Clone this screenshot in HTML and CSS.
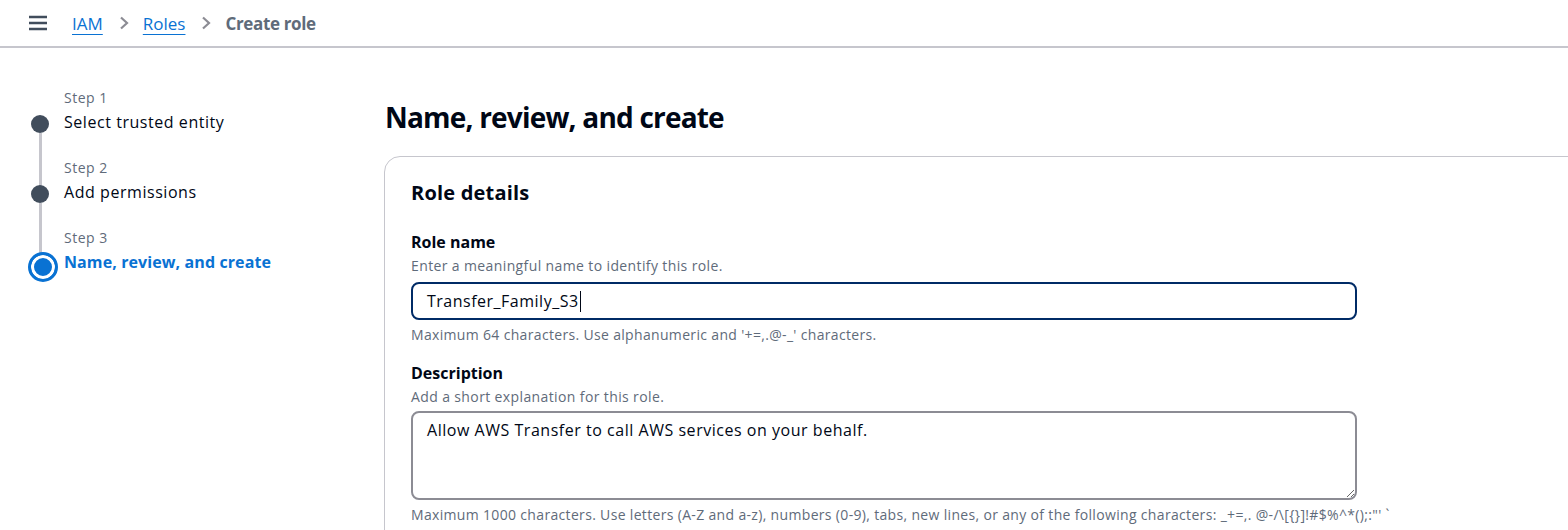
FILE: index.html
```html
<!DOCTYPE html>
<html lang="en">
<head>
<meta charset="utf-8">
<title>Create role</title>
<link rel="stylesheet" href="styles.css">
</head>
<body>
<header class="topbar">
  <button class="menu-btn" aria-label="Menu">
    <svg width="20" height="16" viewBox="0 0 20 16"><path d="M1 2h18M1 8h18M1 14h18" stroke="#414d5c" stroke-width="2.4" fill="none"/></svg>
  </button>
  <nav class="crumbs">
    <a href="#" class="crumb-link">IAM</a>
    <svg class="chev" width="10" height="14" viewBox="0 0 10 14"><path d="M2 1.5l6 5.5-6 5.5" stroke="#8c8c94" stroke-width="2.2" fill="none"/></svg>
    <a href="#" class="crumb-link">Roles</a>
    <svg class="chev" width="10" height="14" viewBox="0 0 10 14"><path d="M2 1.5l6 5.5-6 5.5" stroke="#8c8c94" stroke-width="2.2" fill="none"/></svg>
    <span class="crumb-current">Create role</span>
  </nav>
</header>
<div class="layout">
  <aside class="steps">
    <div class="step done">
      <div class="step-label">Step 1</div>
      <div class="step-title">Select trusted entity</div>
    </div>
    <div class="step done">
      <div class="step-label">Step 2</div>
      <div class="step-title">Add permissions</div>
    </div>
    <div class="step current">
      <div class="step-label">Step 3</div>
      <div class="step-title">Name, review, and create</div>
    </div>
  </aside>
  <main class="main">
    <h1 class="page-title">Name, review, and create</h1>
    <section class="card">
      <h2 class="card-title">Role details</h2>
      <div class="field">
        <div class="field-label">Role name</div>
        <div class="field-desc">Enter a meaningful name to identify this role.</div>
        <div class="input focused" role="textbox">Transfer_Family_S3<span class="caret"></span></div>
        <div class="field-hint">Maximum 64 characters. Use alphanumeric and '+=,.@-_' characters.</div>
      </div>
      <div class="field">
        <div class="field-label">Description</div>
        <div class="field-desc short">Add a short explanation for this role.</div>
        <textarea class="textarea">Allow AWS Transfer to call AWS services on your behalf.</textarea>
        <div class="field-hint">Maximum 1000 characters. Use letters (A-Z and a-z), numbers (0-9), tabs, new lines, or any of the following characters: _+=,. @-/\[{}]!#$%^*();:"' `</div>
      </div>
    </section>
  </main>
</div>
</body>
</html>
```
FILE: styles.css
```css
* { box-sizing: border-box; }
html, body { margin: 0; padding: 0; }
body {
  font-family: "Open Sans", "Noto Sans", sans-serif;
  color: #000716;
  background: #fff;
  overflow: hidden;
  width: 1568px;
  height: 530px;
}
.topbar {
  height: 48px;
  border-bottom: 2px solid #c6c6cd;
  display: flex;
  align-items: center;
  padding-left: 28px;
}
.menu-btn {
  border: 0;
  background: none;
  padding: 0;
  width: 20px;
  height: 16px;
  display: flex;
  margin-right: 24px;
}
.crumbs {
  display: flex;
  align-items: center;
  font-size: 17px;
}
.crumb-link {
  color: #0972d3;
  text-decoration: underline;
  text-underline-offset: 4px;
  text-decoration-thickness: 1px;
}
.chev { margin: 0 14px 0 16px; }
.crumb-current { color: #5f6b7a; font-weight: 700; letter-spacing: -0.35px; }

.layout {
  display: flex;
  padding-top: 40px;
}
.steps {
  width: 384px;
  flex: none;
  padding-left: 64px;
}
.step {
  position: relative;
  height: 70px;
}
.step-label {
  font-size: 14px;
  color: #5f6b7a;
  line-height: 20px;
  letter-spacing: 0.5px;
}
.step-title {
  font-size: 16px;
  line-height: 28px;
  color: #000716;
  letter-spacing: 0.55px;
}
.step::before {
  content: "";
  position: absolute;
  left: -33px;
  top: 27px;
  width: 18px;
  height: 18px;
  border-radius: 50%;
  background: #414d5c;
}
.step.done::after {
  content: "";
  position: absolute;
  left: -25px;
  top: 45px;
  width: 2.5px;
  height: 59px;
  background: #c6c6cd;
}
.step.current::before {
  left: -36px;
  top: 24px;
  width: 24px;
  height: 24px;
  background: #0972d3;
  border: 3px solid #0972d3;
  box-shadow: inset 0 0 0 3px #fff;
}
.step.current .step-title { color: #0972d3; font-weight: 700; letter-spacing: 0.1px; }

.main { flex: none; width: 1400px; }
.page-title {
  font-size: 28px;
  line-height: 36px;
  font-weight: 700;
  margin: 11px 0 21px 1px;
  letter-spacing: -0.8px;
}
.card {
  border: 1px solid #c6c6cd;
  border-radius: 16px;
  padding: 20px 26px;
}
.card-title {
  font-size: 20px;
  line-height: 28px;
  font-weight: 700;
  margin: 2px 0 24px;
  letter-spacing: 0.2px;
}
.field { margin-bottom: 17px; width: 946px; }
.field-label { font-size: 16px; font-weight: 700; line-height: 22px; margin-bottom: 3px; }
.field-desc { font-size: 14px; color: #5f6b7a; line-height: 20px; margin-bottom: 6px; letter-spacing: 0.38px; }
.field-desc.short { margin-bottom: 4px; }
.field-hint { font-size: 14px; color: #5f6b7a; line-height: 20px; margin-top: 5px; white-space: nowrap; letter-spacing: 0.33px; }
.input {
  height: 38px;
  border: 2px solid #002b66;
  border-radius: 8px;
  font-size: 16px;
  padding: 4px 14px;
  line-height: 26px;
  display: flex;
  align-items: center;
  letter-spacing: 0.5px;
}
.caret { display: inline-block; width: 1px; height: 21px; background: #000716; margin-left: 1px; }
.textarea {
  display: block;
  width: 946px;
  height: 89px;
  border: 2px solid #8c8c94;
  border-radius: 8px;
  font-family: inherit;
  font-size: 16px;
  color: #000716;
  padding: 4px 14px;
  line-height: 26px;
  resize: vertical;
  outline: none;
  letter-spacing: 0.53px;
}
```
